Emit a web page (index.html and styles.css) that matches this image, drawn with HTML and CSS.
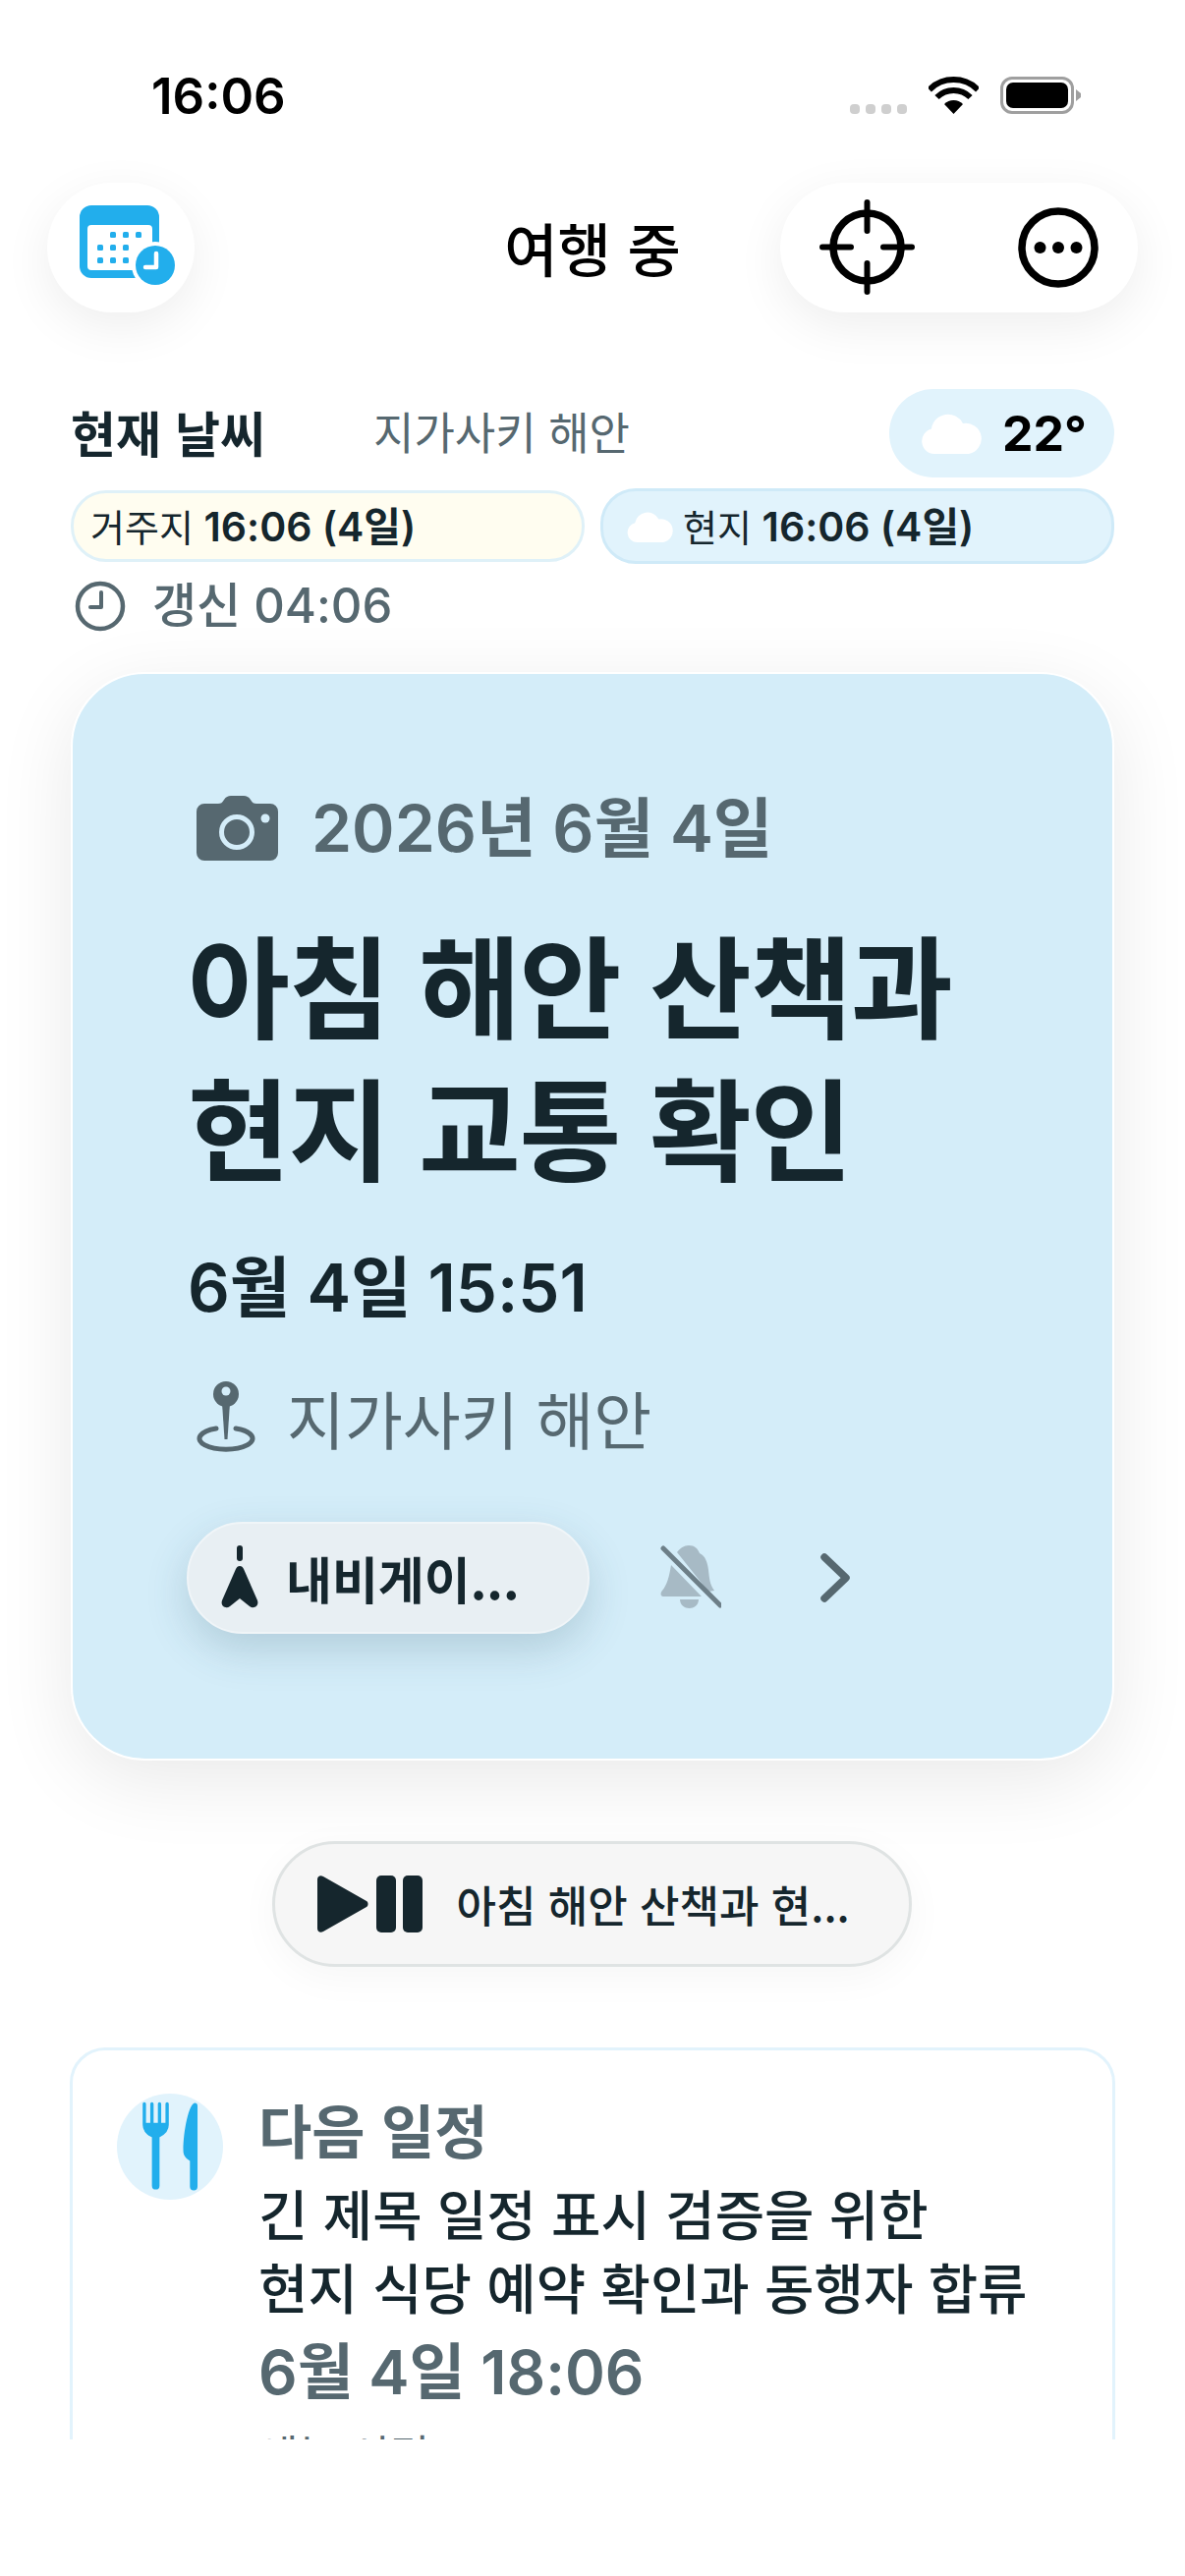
FILE: index.html
```html
<!DOCTYPE html>
<html lang="ko">
<head>
    <meta charset="UTF-8">
    <meta name="viewport" content="width=device-width, initial-scale=1.0">
    <title>여행 중</title>
    <link rel="stylesheet" href="styles.css">
</head>
<body>
<div class="screen">
    <!-- Status bar -->
    <div class="status-bar">
        <div class="status-time">16:06</div>
        <div class="status-icons">
            <div class="signal"><span></span><span></span><span></span><span></span></div>
            <svg class="wifi" viewBox="0 0 51 38" width="51" height="38">
                <path d="M25.500 38 16 28a13.500 13.500 0 0 1 19 0Z" fill="#000"/>
                <path d="M8.500 21A24 24 0 0 1 42.500 21M.8 13.300A35 35 0 0 1 50.200 13.300" fill="none" stroke="#000" stroke-width="6"/>
            </svg>
            <div class="battery"><div class="battery-fill"></div></div>
            <svg class="battery-cap" viewBox="0 0 5 12" width="5" height="12"><path d="M0 0 5 4v4L0 12Z" fill="#9f9f9f"/></svg>
        </div>
    </div>

    <!-- Top navigation -->
    <div class="top-nav">
        <div class="nav-btn nav-left">
            <svg viewBox="0 0 97 81" width="97" height="81">
                <rect x="0" y="0" width="81" height="74" rx="12" fill="#22aeec"/>
                <rect x="8" y="20" width="66" height="46" rx="4" fill="#fff"/>
                <g fill="#22aeec">
                    <rect x="31" y="27" width="6" height="6" rx="1.500"/><rect x="44" y="27" width="6" height="6" rx="1.500"/><rect x="57" y="27" width="6" height="6" rx="1.500"/>
                    <rect x="18" y="40" width="6" height="6" rx="1.500"/><rect x="31" y="40" width="6" height="6" rx="1.500"/><rect x="44" y="40" width="6" height="6" rx="1.500"/>
                    <rect x="18" y="53" width="6" height="6" rx="1.500"/><rect x="31" y="53" width="6" height="6" rx="1.500"/><rect x="44" y="53" width="6" height="6" rx="1.500"/>
                </g>
                <circle cx="77" cy="61" r="24" fill="#fff"/>
                <circle cx="77" cy="61" r="20" fill="#22aeec"/>
                <path d="M78 49v14H67" fill="none" stroke="#fff" stroke-width="4.500" stroke-linecap="round" stroke-linejoin="round"/>
            </svg>
        </div>
        <div class="nav-title">여행 중</div>
        <div class="nav-btn nav-right">
            <svg class="nav-target" viewBox="0 0 97 97" width="97" height="97">
                <circle cx="48.500" cy="48.500" r="34.500" fill="none" stroke="#000" stroke-width="7.500"/>
                <path d="M48.500 3v29M48.500 65v29M3 48.500h29M65 48.500h29" stroke="#000" stroke-width="6" stroke-linecap="round"/>
            </svg>
            <svg viewBox="0 0 84 84" width="84" height="84">
                <circle cx="42" cy="42" r="37" fill="none" stroke="#000" stroke-width="7.500"/>
                <circle cx="23.500" cy="42" r="6"/><circle cx="42" cy="42" r="6"/><circle cx="60.500" cy="42" r="6"/>
            </svg>
        </div>
    </div>

    <!-- Scrolling content, cut off above the tab area -->
    <div class="content">
        <div class="weather-row">
            <div class="weather-title">현재 날씨</div>
            <div class="weather-place">지가사키 해안</div>
            <div class="weather-pill">
                <svg class="cloud" viewBox="0 0 64 42" width="64" height="42"><path d="M14 42a13 13 0 0 1-3-25.600A17 17 0 0 1 43 11a15.500 15.500 0 0 1 6 31Z" fill="#fff"/></svg>
                <span class="temp">22°</span>
            </div>
        </div>

        <div class="chip-row">
            <div class="chip chip-home"><span>거주지 <b>16:06 (4일)</b></span></div>
            <div class="chip chip-local">
                <svg viewBox="0 0 48 32" width="48" height="32"><path d="M10.500 32a10 10 0 0 1-2.300-19.700A13 13 0 0 1 32.500 8.500a11.800 11.800 0 0 1 4.500 23.500Z" fill="#fff"/></svg>
                <span>현지 <b>16:06 (4일)</b></span>
            </div>
        </div>

        <div class="refresh-row">
            <svg viewBox="0 0 52 52" width="52" height="52">
                <circle cx="26" cy="26" r="23" fill="none" stroke="#566870" stroke-width="4.500"/>
                <path d="M27 12v15H16" fill="none" stroke="#566870" stroke-width="4" stroke-linecap="round" stroke-linejoin="round"/>
            </svg>
            <span>갱신 04:06</span>
        </div>

        <!-- Current event card -->
        <div class="event-card">
            <div class="event-date">
                <svg viewBox="0 0 83 66" width="83" height="66">
                    <path d="M8 8h14c3 0 4-1 6-4 2-3 4-4 7-4h13c3 0 5 1 7 4 2 3 3 4 6 4h14a8 8 0 0 1 8 8v42a8 8 0 0 1-8 8H8a8 8 0 0 1-8-8V16a8 8 0 0 1 8-8Z" fill="#566870"/>
                    <circle cx="41" cy="37" r="15.500" fill="none" stroke="#d4edf9" stroke-width="5"/>
                    <circle cx="70" cy="23" r="4.500" fill="#d4edf9"/>
                </svg>
                <span>2026년 6월 4일</span>
            </div>
            <div class="event-title">아침 해안 산책과<br>현지 교통 확인</div>
            <div class="event-time">6월 4일 15:51</div>
            <div class="event-place">
                <svg viewBox="0 0 66 72" width="66" height="72">
                    <path d="M23 48a27 11 0 1 0 20 0" fill="none" stroke="#566870" stroke-width="5" stroke-linecap="round"/>
                    <circle cx="33" cy="13" r="13" fill="#566870"/>
                    <path d="M29 22h8l-2.500 37h-3Z" fill="#566870"/>
                    <circle cx="33" cy="10" r="4.500" fill="#d4edf9"/>
                </svg>
                <span>지가사키 해안</span>
            </div>
            <div class="event-actions">
                <div class="nav-action">
                    <svg viewBox="0 0 40 66" width="40" height="66">
                        <rect x="17" y="0" width="6" height="16" rx="3" fill="#15262d"/>
                        <path d="M20 21c2 0 3 1 4 3l14 32c2 6-4 9-8 6L20 54 10 62c-4 3-10 0-8-6L16 24c1-2 2-3 4-3Z" fill="#15262d"/>
                    </svg>
                    <span>내비게이...</span>
                </div>
                <svg class="bell" viewBox="0 0 62 66" width="62" height="66">
                    <path d="M17 7 C20 3 24 0 29 0 c6 0 9 3 11 8 c6 3 8 9 9 17 c1 8 1 14 6 21 l-6 1Z" fill="#a7bac5"/>
                    <path d="M11 20 42 52H3c-3 0-3-4-1-6 5-6 7-14 9-26Z" fill="#a7bac5"/>
                    <path d="M20 55h19c0 6-5 9-9.500 9S20 61 20 55Z" fill="#a7bac5"/>
                    <path d="M3 3 61 61" stroke="#6d7f88" stroke-width="5" stroke-linecap="round"/>
                </svg>
                <svg class="chevron" viewBox="0 0 32 52" width="32" height="52">
                    <path d="M5 5 27 26 5 47" fill="none" stroke="#566870" stroke-width="7.500" stroke-linecap="round" stroke-linejoin="round"/>
                </svg>
            </div>
        </div>

        <!-- Now playing -->
        <div class="player-wrap">
            <div class="player">
                <svg viewBox="0 0 107 58" width="107" height="58">
                    <path d="M0 4c0-3 3-5 6-3l44 25c2 1 2 5 0 6L6 57c-3 2-6 0-6-3Z" fill="#15262d"/>
                    <rect x="60" y="0" width="20" height="58" rx="5" fill="#15262d"/>
                    <rect x="87" y="0" width="20" height="58" rx="5" fill="#15262d"/>
                </svg>
                <span>아침 해안 산책과 현...</span>
            </div>
        </div>

        <!-- Next event card -->
        <div class="next-card">
            <div class="next-icon">
                <svg viewBox="0 0 60 94" width="58" height="92">
                    <path d="M3 2v22c0 6 4 9 8 11M27 2v22c0 6-4 9-8 11M11 2v20M19 2v20" fill="none" stroke="#22aeec" stroke-width="3.500" stroke-linecap="round"/>
                    <path d="M2 22h24c0 8-3 12-7 14h-10c-4-2-7-6-7-14Z" fill="#22aeec"/>
                    <rect x="11" y="30" width="8" height="62" rx="4" fill="#22aeec"/>
                    <path d="M56 1c2 0 3 1 3 3v85a4 4 0 0 1-8 0V62c-5-3-7-6-7-11C44 30 50 2 56 1Z" fill="#22aeec"/>
                </svg>
            </div>
            <div class="next-body">
                <div class="next-label">다음 일정</div>
                <div class="next-title">긴 제목 일정 표시 검증을 위한<br>현지 식당 예약 확인과 동행자 합류</div>
                <div class="next-time">6월 4일 18:06</div>
                <div class="next-place">에는 시민</div>
            </div>
        </div>
    </div>
</div>
</body>
</html>
```

FILE: styles.css
```css
* {
    box-sizing: border-box;
}

body {
    margin: 0;
    background: #fff;
    font-family: "Noto Sans CJK KR", "Noto Sans", sans-serif;
    color: #15262d;
}

.screen {
    width: 1206px;
    height: 2622px;
    overflow: hidden;
    background: #fff;
}

/* Status bar */
.status-bar {
    height: 186px;
    padding: 68px 106px 0 154px;
    display: flex;
    justify-content: space-between;
    align-items: flex-start;
}

.status-time {
    font-family: Inter, "Liberation Sans", sans-serif;
    font-size: 51px;
    font-weight: 600;
    line-height: 60px;
    color: #000;
}

.status-icons {
    display: flex;
    align-items: flex-end;
    padding-top: 10px;
}

.signal {
    display: flex;
    gap: 6px;
    margin-right: 22px;
}

.signal span {
    width: 10px;
    height: 10px;
    border-radius: 4px;
    background: #cfcfcf;
}

.wifi {
    margin-right: 22px;
}

.battery {
    width: 75px;
    height: 38px;
    padding: 3px;
    border: 3px solid #9f9f9f;
    border-radius: 12px;
}

.battery-fill {
    height: 100%;
    border-radius: 7px;
    background: #000;
}

.battery-cap {
    margin: 0 0 13px 2px;
}

/* Top navigation */
.top-nav {
    position: relative;
    height: 132px;
    padding: 0 48px;
    display: flex;
    justify-content: space-between;
}

.nav-btn {
    display: flex;
    align-items: center;
    border-radius: 66px;
    background: #fff;
    box-shadow: 0 14px 50px rgba(0, 0, 0, 0.07);
}

.nav-left {
    width: 150px;
    padding: 0 0 5px 33px;
}

.nav-right {
    width: 364px;
    padding: 0 39px 0 40px;
    justify-content: space-between;
}

.nav-target {
    margin-bottom: 2px;
}

.nav-title {
    position: absolute;
    left: 0;
    right: 0;
    top: 30px;
    text-align: center;
    font-size: 59px;
    font-weight: 500;
    line-height: 72px;
    color: #000;
    pointer-events: none;
}

/* Scroll area */
.content {
    height: 2165px;
    padding: 78px 72px 0;
    overflow: hidden;
}

.weather-row {
    height: 90px;
    display: flex;
    align-items: center;
}

.weather-title {
    width: 308px;
    margin-bottom: 4px;
    font-size: 50px;
    font-weight: 700;
    line-height: 60px;
}

.weather-place {
    margin-bottom: 4px;
    font-size: 45px;
    color: #566870;
    line-height: 60px;
}

.weather-pill {
    margin-left: auto;
    width: 229px;
    height: 90px;
    padding: 0 28px 0 32px;
    display: flex;
    align-items: center;
    justify-content: space-between;
    border-radius: 45px;
    background: #e1f3fc;
}

.temp {
    font-family: Inter, "Liberation Sans", sans-serif;
    font-size: 50px;
    font-weight: 700;
    color: #000;
}

.chip-row {
    margin-top: 11px;
    display: grid;
    grid-template-columns: 523px 523px;
    gap: 16px;
    align-items: center;
}

.chip {
    display: flex;
    align-items: center;
    font-size: 38px;
    line-height: 48px;
    white-space: pre;
    border-radius: 36px;
}

.chip b {
    font-family: Inter, "Noto Sans CJK KR", sans-serif;
    font-size: 41px;
    font-weight: 600;
}

.chip-home {
    height: 73px;
    padding: 0 17px;
    background: #fffdf0;
    border: 3px solid #dff1f8;
}

.chip-local {
    height: 77px;
    padding: 0 24px;
    gap: 9px;
    background: #e1f3fc;
    border: 3px solid #cfeaf8;
}

.refresh-row {
    margin-top: 8px;
    display: flex;
    align-items: center;
    gap: 27px;
    padding-left: 4px;
    font-family: Inter, "Noto Sans CJK KR", sans-serif;
    font-size: 49px;
    font-weight: 500;
    line-height: 70px;
    color: #566870;
}

/* Current event card */
.event-card {
    margin-top: 32px;
    height: 1108px;
    padding: 119px 118px 0 117px;
    border: 2px solid #fff;
    border-radius: 76px;
    background: #d4edf9;
    box-shadow: 0 20px 80px rgba(0, 0, 0, 0.09);
}

.event-date {
    display: flex;
    align-items: center;
    gap: 34px;
    padding-left: 9px;
    font-family: Inter, "Noto Sans CJK KR", sans-serif;
    font-size: 66px;
    font-weight: 600;
    line-height: 76px;
    color: #566870;
}

.event-title {
    margin-top: 46px;
    font-size: 113px;
    font-weight: 700;
    line-height: 145px;
    letter-spacing: -1.500px;
    white-space: nowrap;
}

.event-time {
    margin-top: 54px;
    font-family: Inter, "Noto Sans CJK KR", sans-serif;
    font-size: 67px;
    font-weight: 600;
    line-height: 80px;
}

.event-place {
    margin-top: 53px;
    display: flex;
    align-items: center;
    gap: 29px;
    padding-left: 6px;
    font-size: 64px;
    line-height: 76px;
    color: #566870;
}

.event-actions {
    margin-top: 69px;
    margin-left: -1px;
    display: flex;
    align-items: center;
}

.nav-action {
    width: 410px;
    height: 114px;
    padding-left: 32px;
    display: flex;
    align-items: center;
    gap: 27px;
    font-size: 51px;
    font-weight: 700;
    border: 2px solid #f0f5f8;
    border-radius: 57px;
    background: #e8eff3;
    box-shadow: 0 16px 44px rgba(40, 80, 100, 0.2);
}

.bell {
    margin-left: 72px;
}

.chevron {
    margin-left: 100px;
}

/* Now playing */
.player-wrap {
    margin-top: 82px;
    display: flex;
    justify-content: center;
}

.player {
    width: 651px;
    height: 128px;
    margin-left: -2px;
    padding-left: 43px;
    display: flex;
    align-items: center;
    gap: 35px;
    font-size: 44px;
    font-weight: 500;
    border: 3px solid #dfe3e3;
    border-radius: 64px;
    background: #f6f6f6;
    box-shadow: 0 10px 40px rgba(0, 0, 0, 0.04);
}

/* Next event card */
.next-card {
    margin: 82px -1px 0;
    height: 500px;
    padding: 44px 45px;
    display: flex;
    gap: 36px;
    border: 3px solid #e2f3fc;
    border-radius: 36px;
    background: #fff;
}

.next-icon {
    flex: none;
    width: 108px;
    height: 108px;
    display: flex;
    align-items: center;
    justify-content: center;
    border-radius: 50%;
    background: #e1f3fc;
}

.next-label {
    font-size: 59px;
    font-weight: 600;
    line-height: 72px;
    color: #566870;
}

.next-title {
    margin-top: 11px;
    font-size: 54.800px;
    font-weight: 500;
    line-height: 75px;
    white-space: nowrap;
}

.next-time {
    margin-top: 15px;
    font-family: Inter, "Noto Sans CJK KR", sans-serif;
    font-size: 62px;
    font-weight: 600;
    line-height: 72px;
    color: #566870;
}

.next-place {
    margin-top: 18px;
    font-size: 44px;
    line-height: 56px;
    color: #566870;
}
```
